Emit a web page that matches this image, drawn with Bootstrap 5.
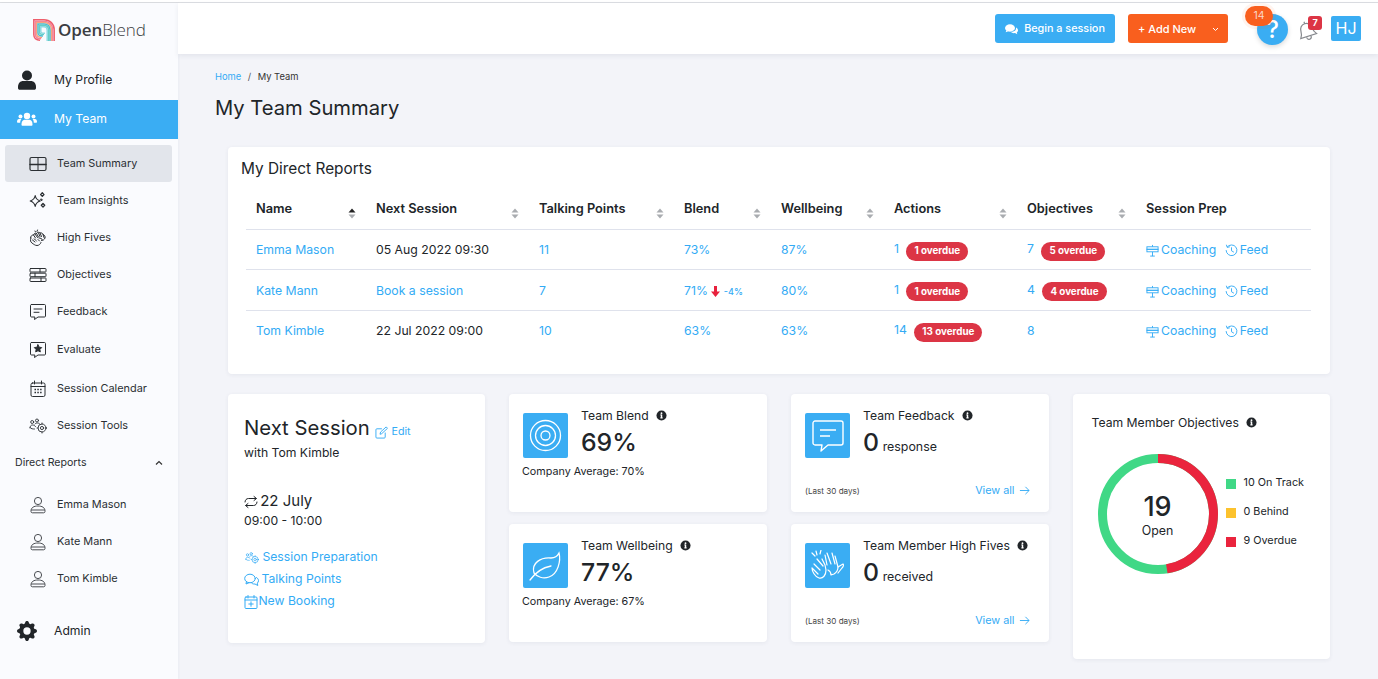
<!DOCTYPE html>
<html lang="en"><head><meta charset="utf-8"><title>OpenBlend</title>
<link href="https://cdn.jsdelivr.net/npm/bootstrap@5.3.0/dist/css/bootstrap.min.css" rel="stylesheet">
<style>
:root{--ob-blue:#3aadf3;--ob-link:#33abf5;--ob-dark:#212529;}
html,body{height:679px;overflow:hidden}
body{font-family:Inter,"Liberation Sans",sans-serif;background:#f3f4f9;color:var(--ob-dark);font-size:12.2px}
a{color:var(--ob-link);text-decoration:none}
.topline{height:3px;background:#fff;border-bottom:1px solid #dcdee2}
.shell{height:676px}
.sidebar{width:178px;flex:none;background:#fafbfe;box-shadow:1px 0 2px rgba(30,40,70,.04)}
.brand{height:57px;padding:16px 0 0 33px;gap:3px}
.brand-name{font-size:17px;letter-spacing:-.1px;line-height:22px;color:#3b3d42;font-family:"Open Sans",Inter,sans-serif;font-weight:600}
.brand-name span{font-weight:300}
.top-link{height:39.5px;padding:1px 0 0 17px;gap:17px;font-size:12.2px;color:var(--ob-dark)}
.top-link.active{background:var(--ob-blue);color:#fff;padding-top:0}
.sub-list{padding-top:6px}
.sub-link{height:37px;margin:0 6px 0 5px;padding:0 0 0 24px;gap:10px;font-size:10.9px;color:#2b2f33;border-radius:3px}
.sub-link.active{background:#e2e5eb}
.sub-link svg{flex:none}
.nudge-1{margin-top:1px}.nudge-2{margin-top:2px}
.section-head{height:37px;padding:0 15px;font-size:10.6px;color:#2b2f33}
.people-list{margin-top:5px}
.person-ico{color:#4a4d52}
.top-link.admin-link{margin-top:14px;padding-top:0}
.stroke-i{fill:none;stroke:currentColor;stroke-width:1;stroke-linecap:round;stroke-linejoin:round}
.fill-i{fill:currentColor}
.topbar{height:51px;background:#fff;box-shadow:0 2px 5px rgba(40,50,80,.08);padding:0 17px 0 0;justify-content:flex-end;position:relative;z-index:2}
.act-btn{height:29px;font-size:10.8px;border-radius:3px;border:0;color:#fff;display:flex;align-items:center;font-weight:500;padding-top:2px}
.begin-btn{width:120px;background:var(--ob-blue);justify-content:center;gap:6px;margin-right:13px}
.add-btn{width:100px;background:#f95f1e;padding:1px 9px 0 10px;justify-content:space-between;margin-right:17px;font-size:11px}
.help-wrap{width:56px;height:44px;margin-top:-4px}
.help-dot{position:absolute;left:12px;top:9px;width:31px;height:31px;border-radius:50%;background:var(--ob-blue);color:#fff;font-size:24px;line-height:31px;text-align:center;font-weight:500;box-shadow:0 2px 5px rgba(0,0,0,.15)}
.help-count{position:absolute;left:0;top:1px;width:28px;height:20px;border-radius:10px;background:#f95f1e;color:#fbd9c8;font-size:10.5px;line-height:20px;text-align:center;box-shadow:0 0 0 3px rgba(249,95,30,.07)}
.bell-wrap{width:27px;height:30px;margin-left:-1px;margin-right:4px;color:#85888d}
.bell-svg{position:absolute;left:-6px;top:4px}
.bell-count{position:absolute;left:8px;top:2px;width:14px;height:14px;border-radius:3px;background:#dc3545;color:#fff;font-size:9px;font-weight:700;line-height:14px;text-align:center}
.initials{width:30px;height:25px;background:var(--ob-blue);border-radius:2px;color:#fff;font-size:16px;line-height:25px;text-align:center}
.content{padding:0 48px 0 37px}
.crumbs{margin:17px 0 0;font-size:9.4px;--bs-breadcrumb-divider-color:#555;--bs-breadcrumb-item-padding-x:6.5px;--bs-breadcrumb-margin-bottom:0;line-height:12px}
.crumbs .active{color:#333}
.page-title{font-size:20.2px;font-weight:400;line-height:26px;margin:12px 0 0}
.panel-wrap{margin:26px 0 0 13px}
.panel{border:0;border-radius:4px;background:#fff;box-shadow:0 1px 4px rgba(40,50,80,.07)}
.reports-panel{height:227px;padding:11px 19px 0 13px}
.reports-title{font-size:15.4px;font-weight:400;line-height:21px;margin:0 0 9px}
.reports-table{margin:0 0 0 5px;width:1065px;table-layout:fixed;font-size:12.25px;--bs-table-border-color:#dfe2ec}
.reports-table th{font-weight:600;height:41px;padding:1px 10px 0;vertical-align:middle;position:relative;font-size:12.8px}
.reports-table td{height:40.5px;padding:2px 10px 0;vertical-align:middle;white-space:nowrap}
.reports-table tr:last-child td{border-bottom:0}
.sorter{position:absolute;top:20px;right:10px;width:8px;height:11px}
.overdue{font-size:9.8px;font-weight:700;--bs-badge-padding-y:4.5px;--bs-badge-padding-x:8px;margin-left:4px;line-height:10px;vertical-align:-1px}
.delta{font-size:9px;font-weight:500}
.prep-link{margin-right:5px}
.prep-link svg{margin-right:2px}
.feed-link svg{margin-right:2px}
.cards-row{margin-top:20px}
.tall-a{height:249px;padding:21px 16px;margin-right:.5px}
.session-title{font-size:20.3px;font-weight:400;line-height:25px;margin:0}
.edit-link{font-size:10.7px}
.session-date{font-size:15px;line-height:20px;margin-top:29px}
.session-date svg{margin-right:-2px}
.session-time{line-height:20px}
.session-links{margin-top:15px;line-height:22px}
.session-links svg{margin-right:-1px}
.session-links svg.tight{margin-right:-3px}
.mini{height:118px;padding:19px 14px 0}
.mid-a .mini{margin-left:-.5px}
.mini-ico{width:45px;height:45px;background:var(--ob-blue);border-radius:2px;flex:none;display:flex;align-items:center;justify-content:center;color:#fff}
.mini-title{font-size:12.2px;line-height:14px;height:14px;margin-top:-4px}
.mini-title svg{vertical-align:-1px}
.mini-num{font-size:24.8px;font-weight:500;line-height:32px;margin-top:3px;height:32px}
.mini-num small{font-size:12.4px;font-weight:400;margin-left:-3px}
.mini-note{font-size:10.75px;margin:7px 0 0 -1px;line-height:14px}
.mini-foot{margin-top:26px;padding-right:5px;height:14px}
.fine{font-size:8.1px;color:#444}
.view-all{font-size:10.8px;margin-left:2px}
.view-all svg{margin-left:1px}
.donut-panel{height:265px;padding:20px 19px}
.legend-item{font-size:10.8px;height:29px}
.legend-sw{width:10px;height:10px;margin-right:8px}
.donut-center{position:absolute;inset:0;text-align:center;padding-top:36px}
.donut-big{font-size:27px;font-weight:500;line-height:34px}
.donut-sub{font-size:12.4px;line-height:14px}
.gap-3x{gap:12px}.gap-2x{gap:13px}
.mini-body{min-width:0}
.sw-green{background:#40d886}.sw-amber{background:#fcc22d}.sw-red{background:#ea243d}
.donut-title{margin-top:1px;height:16px;line-height:16px}
.donut-row{margin-top:23px;margin-left:6px}
.donut-box{width:120px;height:120px;margin-right:8px}
.legend-col{padding-top:15px}
</style></head>
<body>
<svg width="0" height="0" class="position-absolute">
<defs>
<symbol id="i-info" viewBox="0 0 12 12"><circle cx="6" cy="6" r="5.5" fill="#212529"/><rect x="5.2" y="5" width="1.6" height="4" fill="#fff"/><rect x="4.6" y="8.2" width="2.8" height=".9" fill="#fff"/><rect x="4.6" y="5" width="1.5" height=".8" fill="#fff"/><circle cx="6" cy="3.5" r="1" fill="#fff"/></symbol>
<symbol id="i-coach" viewBox="0 0 14 14"><g fill="none" stroke="currentColor" stroke-width="1"><path d="M7 1v2M7 8.500v4.500M4.500 13h5"/><rect x="1" y="3" width="12" height="2.700"/><rect x="1" y="5.700" width="12" height="2.700"/></g></symbol>
<symbol id="i-feed" viewBox="0 0 14 14"><g fill="none" stroke="currentColor" stroke-width="1" stroke-linecap="round"><path d="M2.400 3.200A5.800 5.800 0 1 1 1.200 7"/><path d="M1.600 1.200l.8 2.400 2.400-.5"/><path d="M7 4v3.300l2.200 1.300"/></g></symbol>
<symbol id="i-person" viewBox="0 0 18 18"><g fill="none" stroke="currentColor" stroke-width="1"><circle cx="9" cy="5" r="3.600"/><path d="M2 15c0-3.500 3-5 7-5s7 1.500 7 5v.5c0 .8-.5 1.300-1.300 1.300H3.300C2.500 16.800 2 16.300 2 15.500z"/><path d="M2.200 14h13.600"/></g></symbol>
<symbol id="i-tools" viewBox="0 0 18 18"><g fill="none" stroke="currentColor" stroke-width=".9" stroke-linecap="round"><circle cx="3.200" cy="5" r="1.500"/><circle cx="8" cy="3.500" r="1.500"/><path d="M1 11c0-2 1-3 2.500-3s2 .6 3 1.500M6 7c.6-.8 1.300-1 2.500-1s2 .5 2.500 1.200M1 10.500c1 1.500 3 1.500 4.500 1.500"/><circle cx="13" cy="11" r="4"/><circle cx="13" cy="11" r="1.600"/><path d="M13 6v1M13 15v1M8 11h1M17 11h1"/></g></symbol>
<symbol id="i-arrow" viewBox="0 0 12 12"><path d="M1 6h10M7 2l4 4-4 4" fill="none" stroke="currentColor" stroke-width="1"/></symbol>
<symbol id="i-sort" viewBox="0 0 8 11"><path d="M4 .5L7.500 4.500H.5z" fill="#a9acb0"/><path d="M4 10.500L.5 6.500h7z" fill="#a9acb0"/></symbol>
<symbol id="i-sorta" viewBox="0 0 8 11"><path d="M4 .5L7.500 4.500H.5z" fill="#222"/><path d="M4 10.500L.5 6.500h7z" fill="#a9acb0"/></symbol>
</defs>
</svg>
<div class="topline"></div>
<div class="shell d-flex">
<aside class="sidebar d-flex flex-column">
  <div class="brand d-flex align-items-start">
    <svg width="22" height="22" viewBox="0 0 22 22"><g fill="none" stroke-width="1.500"><path d="M7 21.200C3 21.200 .8 19 .8 15.500V.8H11C17 .8 21.200 5 21.200 11V22" stroke="#ee5f6c"/><path d="M8 19.800C4 19.800 2.200 18 2.200 15V2.200H11C16.200 2.200 19.800 5.800 19.800 11V22" stroke="#f3819b"/><path d="M9 18.400C5.200 18.400 3.600 17 3.600 14.500V3.600H11C15.400 3.600 18.400 6.600 18.400 11V22" stroke="#f8a27f"/><path d="M10 17C6.400 17 5 15.800 5 14V5H11C14.600 5 17 7.400 17 11V22" stroke="#4fbcd0"/><path d="M11 15.600C7.600 15.600 6.400 14.600 6.400 13V6.400H11C13.800 6.400 15.600 8.200 15.600 11V22" stroke="#65cfc6"/><path d="M14.200 22V11C14.200 9 13 7.800 11 7.800H7.800V12.500C7.800 13.500 8.500 14.200 10 14.200H12" stroke="#8fd9e2"/></g></svg>
    <div class="brand-name">Open<span>Blend</span></div>
  </div>
  <nav class="nav flex-column flex-nowrap">
    <a class="nav-link top-link d-flex align-items-center" href="#"><svg width="20" height="20" viewBox="0 0 20 20" class="fill-i"><circle cx="10" cy="5.500" r="5"/><path d="M1 17c0-4 2.500-6 5-6h8c2.500 0 5 2 5 6v1c0 1-.8 1.800-1.800 1.800H2.800C1.800 19.800 1 19 1 18z"/></svg><span>My Profile</span></a>
    <a class="nav-link top-link active d-flex align-items-center" href="#"><svg width="20" height="14" viewBox="0 0 20 14" class="fill-i"><circle cx="10" cy="4" r="3.200"/><circle cx="3.500" cy="4.500" r="2"/><circle cx="16.500" cy="4.500" r="2"/><path d="M4.500 12c0-3 2-4.200 3-4.200h5c1 0 3 1.200 3 4.200v.7c0 .7-.5 1.100-1.100 1.100H5.600c-.6 0-1.100-.4-1.100-1.100z"/><path d="M0 10c0-2 .8-3 2-3h2.500C3.500 8 3.200 9.500 3.200 10.800H.8c-.5 0-.8-.3-.8-.8zM20 10c0-2-.8-3-2-3h-2.500c1 1 1.300 2.500 1.300 3.800h2.400c.5 0 .8-.3.8-.8z"/></svg><span>My Team</span></a>
  </nav>
  <nav class="nav flex-column flex-nowrap sub-list">
    <a class="nav-link sub-link active d-flex align-items-center" href="#"><svg width="18" height="18" viewBox="0 0 18 18" class="stroke-i"><rect x="1" y="2.500" width="16" height="13" rx="1.500" stroke-width="1.200"/><path d="M9 2.500v13"/><path d="M1 9.500h16" stroke-width="1.500"/></svg><span>Team Summary</span></a>
    <a class="nav-link sub-link d-flex align-items-center" href="#"><svg width="18" height="18" viewBox="0 0 18 18" class="stroke-i"><path d="M6.200 3.500c.6 3.300 1.600 4.500 5 5.500-3.400 1-4.400 2.200-5 5.500-.6-3.300-1.600-4.500-5-5.500 3.400-1 4.400-2.200 5-5.500z" stroke-width="1.100"/><path d="M13.300 .8l1.700 1.800-1.700 1.800-1.700-1.800zM14 11.500l1.700 1.800-1.700 1.800-1.700-1.800z" stroke-width="1.300"/><path d="M12.500 7l.9.9-.9.9-.9-.9z" fill="currentColor"/></svg><span>Team Insights</span></a>
    <a class="nav-link sub-link d-flex align-items-center" href="#"><svg width="18" height="18" viewBox="0 0 18 18" class="stroke-i" stroke-width="1.100"><path d="M1.500 9c0-2 1.500-3 3-3 .5-1.500 2-2 3-1.500 1-1.500 3-1.500 3.500-.5 1.500-.5 3 .5 3 1.500 1.500.5 2.500 2 2 3.500-.5 1.500-2 2.500-3.500 2.500"/><path d="M2 9c-1 2.500-.5 4 1 5s3 2.500 5 2.500 3.500-1.500 4-3"/><path d="M4.500 6l2 3M6 5l2.500 3.500M7.500 4.500l2 3.500M9.500 4l1.500 3.500M11 4l1.500 3.500M14 5.500l1 3M10 9c1.500 0 3 .5 3.500 2M5 10c1 .5 2 1 2.500 2M3.500 11l2.500 2M9 10.500l1.500 1.500M6 2l.5 1M8.500 1L8 2.500"/></svg><span>High Fives</span></a>
    <a class="nav-link sub-link d-flex align-items-center" href="#"><svg width="18" height="18" viewBox="0 0 18 18" class="stroke-i"><rect x="1" y="2.500" width="16" height="3.500" rx=".6"/><rect x="1" y="7.200" width="16" height="3.500" rx=".6"/><rect x="1" y="12" width="16" height="3.500" rx=".6"/><path d="M11 2.500V6M6 7.200v3.500M12 12v3.500"/></svg><span>Objectives</span></a>
    <a class="nav-link sub-link d-flex align-items-center" href="#"><svg width="18" height="18" viewBox="0 0 18 18" class="stroke-i"><path d="M2.500 1.500h13c.6 0 1 .4 1 1V13c0 .6-.4 1-1 1H9l-3.500 2.500.4-2.500H2.500c-.6 0-1-.4-1-1V2.500c0-.6.4-1 1-1z"/><path d="M5 6h8M5 9.300h5"/></svg><span>Feedback</span></a>
    <a class="nav-link sub-link nudge-1 d-flex align-items-center" href="#"><svg width="18" height="18" viewBox="0 0 18 18" class="stroke-i"><path d="M2.500 1.500h13c.6 0 1 .4 1 1V13c0 .6-.4 1-1 1H9l-3.500 2.500.4-2.500H2.500c-.6 0-1-.4-1-1V2.500c0-.6.4-1 1-1z"/><path d="M9 3.800l1.200 2.400 2.500.4-1.800 1.800.4 2.500L9 9.700l-2.300 1.200.4-2.500-1.800-1.800 2.500-.4z" fill="currentColor"/></svg><span>Evaluate</span></a>
    <a class="nav-link sub-link nudge-2 d-flex align-items-center" href="#"><svg width="18" height="18" viewBox="0 0 18 18" class="stroke-i"><rect x="2" y="3" width="14" height="13.500" rx="1.500"/><path d="M2 6.500h14M5.500 1v3M12.500 1v3"/><path d="M5.500 9.500h1.500M8.300 9.500h1.500M11.100 9.500h1.500M5.500 12.500h1.500M8.300 12.500h1.500M11.100 12.500h1.500" stroke-width="1.400" stroke-linecap="butt"/></svg><span>Session Calendar</span></a>
    <a class="nav-link sub-link d-flex align-items-center" href="#"><svg width="18" height="18"><use href="#i-tools"/></svg><span>Session Tools</span></a>
  </nav>
  <div class="section-head d-flex align-items-center justify-content-between"><span>Direct Reports</span><svg width="8" height="6" viewBox="0 0 8 6"><path d="M1 4.500L4 1.500l3 3" fill="none" stroke="#333" stroke-width="1.200"/></svg></div>
  <nav class="nav flex-column flex-nowrap people-list">
    <a class="nav-link sub-link d-flex align-items-center" href="#"><svg width="18" height="18" class="person-ico"><use href="#i-person"/></svg><span>Emma Mason</span></a>
    <a class="nav-link sub-link d-flex align-items-center" href="#"><svg width="18" height="18" class="person-ico"><use href="#i-person"/></svg><span>Kate Mann</span></a>
    <a class="nav-link sub-link d-flex align-items-center" href="#"><svg width="18" height="18" class="person-ico"><use href="#i-person"/></svg><span>Tom Kimble</span></a>
    <a class="nav-link top-link admin-link d-flex align-items-center" href="#"><svg width="20" height="20" viewBox="0 0 16 16" class="fill-i"><path d="M9.405 1.050c-.413-1.400-2.397-1.400-2.810 0l-.100.340a1.464 1.464 0 0 1-2.105.872l-.310-.170c-1.283-.698-2.686.705-1.987 1.987l.169.311c.446.820.023 1.841-.872 2.105l-.340.100c-1.400.413-1.400 2.397 0 2.810l.340.100a1.464 1.464 0 0 1 .872 2.105l-.170.310c-.698 1.283.705 2.686 1.987 1.987l.311-.169a1.464 1.464 0 0 1 2.105.872l.100.340c.413 1.400 2.397 1.400 2.810 0l.100-.340a1.464 1.464 0 0 1 2.105-.872l.310.170c1.283.698 2.686-.705 1.987-1.987l-.169-.311a1.464 1.464 0 0 1 .872-2.105l.340-.100c1.400-.413 1.400-2.397 0-2.810l-.340-.100a1.464 1.464 0 0 1-.872-2.105l.170-.310c.698-1.283-.705-2.686-1.987-1.987l-.311.169a1.464 1.464 0 0 1-2.105-.872l-.100-.340zM8 10.930a2.929 2.929 0 1 1 0-5.860 2.929 2.929 0 0 1 0 5.858z"/></svg><span>Admin</span></a>
  </nav>
</aside>
<div class="flex-grow-1 d-flex flex-column">
  <header class="topbar d-flex align-items-center">
    <button class="act-btn begin-btn"><svg width="13" height="11" viewBox="0 0 13 11" fill="#fff"><ellipse cx="5" cy="4" rx="5" ry="3.700"/><path d="M1.500 6l-.8 2.300L4 7z"/><path d="M11 3.500c1.300.7 2 1.500 2 2.800 0 1-.5 1.700-1.200 2.200l.5 1.800-2.300-1.200c-1.800.3-3.500-.2-4.200-1.300 2.900.1 5.700-1.300 5.200-4.300z"/></svg><span>Begin a session</span></button>
    <button class="act-btn add-btn"><span>+ Add New</span><svg width="7" height="5" viewBox="0 0 7 5"><path d="M1 1l2.500 2.500L6 1" fill="none" stroke="#fff" stroke-width="1"/></svg></button>
    <div class="help-wrap position-relative"><div class="help-dot">?</div><div class="help-count">14</div></div>
    <div class="bell-wrap position-relative"><svg width="26" height="26" viewBox="0 0 22 22" class="bell-svg"><g fill="none" stroke="currentColor" stroke-width="1" transform="rotate(-18 11 11)"><path d="M4 15.500c1.200-1.500 2-3 2-5.500 0-3 2-5.500 5-5.500s5 2.500 5 5.500c0 2.500.8 4 2 5.500z"/><path d="M9 16c0 1.500 1 2.300 2 2.300s2-.8 2-2.300M11 2.800v1.700"/></g></svg><div class="bell-count">7</div></div>
    <div class="initials">HJ</div>
  </header>
  <main class="content">
    <ol class="breadcrumb crumbs"><li class="breadcrumb-item"><a href="#">Home</a></li><li class="breadcrumb-item active">My Team</li></ol>
    <h1 class="page-title">My Team Summary</h1>
    <div class="panel-wrap">
      <section class="card panel reports-panel">
        <h2 class="reports-title">My Direct Reports</h2>
        <table class="table reports-table">
          <colgroup><col style="width:120px"><col style="width:163px"><col style="width:145px"><col style="width:97px"><col style="width:113px"><col style="width:133px"><col style="width:119px"><col style="width:175px"></colgroup>
          <thead><tr>
            <th>Name<svg class="sorter"><use href="#i-sorta"/></svg></th>
            <th>Next Session<svg class="sorter"><use href="#i-sort"/></svg></th>
            <th>Talking Points<svg class="sorter"><use href="#i-sort"/></svg></th>
            <th>Blend<svg class="sorter"><use href="#i-sort"/></svg></th>
            <th>Wellbeing<svg class="sorter"><use href="#i-sort"/></svg></th>
            <th>Actions<svg class="sorter"><use href="#i-sort"/></svg></th>
            <th>Objectives<svg class="sorter"><use href="#i-sort"/></svg></th>
            <th>Session Prep</th>
          </tr></thead>
          <tbody>
            <tr><td><a href="#">Emma Mason</a></td><td>05 Aug 2022 09:30</td><td><a href="#">11</a></td><td><a href="#">73%</a></td><td><a href="#">87%</a></td><td><a href="#">1</a> <span class="badge rounded-pill text-bg-danger overdue">1 overdue</span></td><td><a href="#">7</a> <span class="badge rounded-pill text-bg-danger overdue">5 overdue</span></td><td><a href="#" class="prep-link"><svg width="13" height="13"><use href="#i-coach"/></svg>Coaching</a> <a href="#" class="feed-link"><svg width="13" height="13"><use href="#i-feed"/></svg>Feed</a></td></tr>
            <tr><td><a href="#">Kate Mann</a></td><td><a href="#">Book a session</a></td><td><a href="#">7</a></td><td><a href="#">71%</a> <svg width="9" height="11" viewBox="0 0 9 11"><path d="M3 0h3v5.500h3L4.500 11 0 5.500h3z" fill="#e8213d"/></svg> <a href="#" class="delta">-4%</a></td><td><a href="#">80%</a></td><td><a href="#">1</a> <span class="badge rounded-pill text-bg-danger overdue">1 overdue</span></td><td><a href="#">4</a> <span class="badge rounded-pill text-bg-danger overdue">4 overdue</span></td><td><a href="#" class="prep-link"><svg width="13" height="13"><use href="#i-coach"/></svg>Coaching</a> <a href="#" class="feed-link"><svg width="13" height="13"><use href="#i-feed"/></svg>Feed</a></td></tr>
            <tr><td><a href="#">Tom Kimble</a></td><td>22 Jul 2022 09:00</td><td><a href="#">10</a></td><td><a href="#">63%</a></td><td><a href="#">63%</a></td><td><a href="#">14</a> <span class="badge rounded-pill text-bg-danger overdue">13 overdue</span></td><td><a href="#">8</a></td><td><a href="#" class="prep-link"><svg width="13" height="13"><use href="#i-coach"/></svg>Coaching</a> <a href="#" class="feed-link"><svg width="13" height="13"><use href="#i-feed"/></svg>Feed</a></td></tr>
          </tbody>
        </table>
      </section>
      <div class="row gx-4 cards-row">
        <div class="col-3">
          <section class="card panel tall-a">
            <h2 class="session-title">Next Session <a href="#" class="edit-link"><svg width="13" height="13" viewBox="0 0 14 14" class="stroke-i"><path d="M11 7.500V12c0 .6-.4 1-1 1H2c-.6 0-1-.4-1-1V4c0-.6.4-1 1-1h5"/><path d="M5.500 8.500l.5-2 6-5.500 1.500 1.500-6 5.500z"/></svg> Edit</a></h2>
            <div>with Tom Kimble</div>
            <div class="session-date"><svg width="14" height="14" viewBox="0 0 14 14" class="stroke-i"><path d="M1 7c0-2 1.500-3.500 3.500-3.500H12M10 1.500l2.500 2-2.500 2M13 7c0 2-1.500 3.500-3.500 3.500H2M4 8.500l-2.500 2 2.500 2"/></svg> 22 July</div>
            <div class="session-time">09:00 - 10:00</div>
            <div class="session-links d-flex flex-column">
              <a href="#"><svg width="16" height="14" viewBox="0 0 18 18"><use href="#i-tools"/></svg> Session Preparation</a>
              <a href="#"><svg width="15" height="14" viewBox="0 0 15 14" class="stroke-i"><ellipse cx="6" cy="5.500" rx="5.300" ry="4.300"/><path d="M2.500 8.500L2 11l3-1.300M12.500 4.500c1.500 1 2 2 2 3.200 0 1-.5 1.800-1.200 2.400l.5 2.400-2.800-1.500c-1.800.2-3.300-.4-4-1.500"/></svg> Talking Points</a>
              <a href="#"><svg width="14" height="14" viewBox="0 0 14 14" class="stroke-i tight"><rect x="1" y="2" width="12" height="11.500" rx="1"/><path d="M1 5h12M4 .5v2.500M10 .5v2.500M7 6.800v4.500M4.800 9h4.400"/></svg> New Booking</a>
            </div>
          </section>
        </div>
        <div class="col-3 mid-a d-flex flex-column gap-3x">
          <section class="card panel mini">
            <div class="d-flex gap-2x"><div class="mini-ico"><svg width="33" height="33" viewBox="0 0 33 33" fill="none" stroke="#fff" stroke-width="1.300"><circle cx="16.500" cy="16.500" r="15"/><circle cx="16.500" cy="16.500" r="10"/><circle cx="16.500" cy="16.500" r="4.500"/></svg></div><div class="mini-body"><div class="mini-title">Team Blend <svg width="11" height="11" class="ms-1"><use href="#i-info"/></svg></div><div class="mini-num">69%</div></div></div>
            <div class="mini-note">Company Average: 70%</div>
          </section>
          <section class="card panel mini">
            <div class="d-flex gap-2x"><div class="mini-ico"><svg width="33" height="30" viewBox="0 0 33 30" fill="none" stroke="#fff" stroke-width="1.300" stroke-linecap="round"><path d="M5 22C2 12 12 6 22 7c4 0 7-3 8-5 2 8-1 21-10 24-6 2-12 0-15-4z"/><path d="M1 29c5-7 11-12 21-14"/></svg></div><div class="mini-body"><div class="mini-title">Team Wellbeing <svg width="11" height="11" class="ms-1"><use href="#i-info"/></svg></div><div class="mini-num">77%</div></div></div>
            <div class="mini-note">Company Average: 67%</div>
          </section>
        </div>
        <div class="col-3 d-flex flex-column gap-3x">
          <section class="card panel mini">
            <div class="d-flex gap-2x"><div class="mini-ico"><svg width="32" height="32" viewBox="0 0 32 32" fill="none" stroke="#fff" stroke-width="1.400" stroke-linejoin="round"><path d="M3 1h26c1 0 2 1 2 2v20c0 1-1 2-2 2H16l-7 6 1-6H3c-1 0-2-1-2-2V3c0-1 1-2 2-2z"/><path d="M8 10h16M8 16h10"/></svg></div><div class="mini-body"><div class="mini-title">Team Feedback <svg width="11" height="11" class="ms-1"><use href="#i-info"/></svg></div><div class="mini-num">0 <small>response</small></div></div></div>
            <div class="mini-foot d-flex justify-content-between align-items-center"><span class="fine">(Last 30 days)</span><a href="#" class="view-all">View all <svg width="11" height="11"><use href="#i-arrow"/></svg></a></div>
          </section>
          <section class="card panel mini">
            <div class="d-flex gap-2x"><div class="mini-ico"><svg width="33" height="31" viewBox="0 0 33 31" fill="none" stroke="#fff" stroke-width="1.200" stroke-linecap="round" stroke-linejoin="round"><path d="M3 14l6 6M1 18l6 6M6 9l6 7M11 9l3 6 1 5c0 5-3 9-7 8-4-1-7-7-7-10"/><path d="M16 15l-2-10M20 14l-4-11M24 14l-3-11M27 17l-3-11M17 20c2 1 3 2 3 5l3-1c3-2 4-4 4-7"/><path d="M27 17l5-3c1 1 0 3-1 4l-4 5M5 1l1 4M10 0l-1 4M1 3l3 3"/></svg></div><div class="mini-body"><div class="mini-title">Team Member High Fives <svg width="11" height="11" class="ms-1"><use href="#i-info"/></svg></div><div class="mini-num">0 <small>received</small></div></div></div>
            <div class="mini-foot d-flex justify-content-between align-items-center"><span class="fine">(Last 30 days)</span><a href="#" class="view-all">View all <svg width="11" height="11"><use href="#i-arrow"/></svg></a></div>
          </section>
        </div>
        <div class="col-3">
          <section class="card panel donut-panel">
            <div class="mini-title donut-title">Team Member Objectives <svg width="11" height="11" class="ms-1"><use href="#i-info"/></svg></div>
            <div class="d-flex donut-row">
              <div class="position-relative donut-box">
                <svg width="120" height="120" viewBox="0 0 120 120"><circle cx="60" cy="60" r="55.500" fill="none" stroke="#40d886" stroke-width="9"/><circle cx="60" cy="60" r="55.500" fill="none" stroke="#ea243d" stroke-width="9" stroke-dasharray="165.200 348.700" transform="rotate(-90 60 60)"/></svg>
                <div class="donut-center"><div class="donut-big">19</div><div class="donut-sub">Open</div></div>
              </div>
              <div class="legend-col">
                <div class="legend-item d-flex align-items-center"><span class="legend-sw sw-green"></span>10 On Track</div>
                <div class="legend-item d-flex align-items-center"><span class="legend-sw sw-amber"></span>0 Behind</div>
                <div class="legend-item d-flex align-items-center"><span class="legend-sw sw-red"></span>9 Overdue</div>
              </div>
            </div>
          </section>
        </div>
      </div>
    </div>
  </main>
</div>
</div>
</body></html>
